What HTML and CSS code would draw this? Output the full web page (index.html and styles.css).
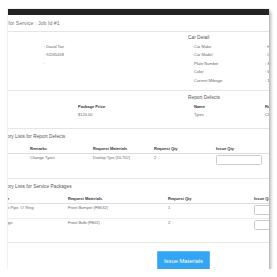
FILE: index.html
```html
<!DOCTYPE html>
<html>
<head>
    <title>Request for Service</title>
    <link rel="stylesheet" href="styles.css">
</head>
<body>
    <div class="modal">
        <div class="topbar"></div>
        <div class="modal-header">
            <h3 class="title">Request for Service : Job Id #1</h3>
        </div>
        <div class="modal-body">
            <div class="cols">
                <div class="col">
                    <h4>Customer Detail</h4>
                    <div class="row"><span class="label">Name</span><span>: David Tan</span></div>
                    <div class="row"><span class="label">Contact No.</span><span>: 92265458</span></div>
                    <div class="row"><span class="label">Email</span><span>:</span></div>
                </div>
                <div class="col">
                    <h4>Car Detail</h4>
                    <div class="row"><span class="label">Car Make</span><span>: Honda</span></div>
                    <div class="row"><span class="label">Car Model</span><span>: Civic</span></div>
                    <div class="row"><span class="label">Plate Number</span><span>: SJA1234</span></div>
                    <div class="row"><span class="label">Color</span><span>: White</span></div>
                    <div class="row"><span class="label">Current Mileage</span><span>: 12000</span></div>
                </div>
            </div>
            <hr>
            <div class="cols">
                <div class="col">
                    <h4>Service Package</h4>
                    <div class="row"><span class="label wide bold">Package Name</span><span class="bold">Package Price</span></div>
                    <div class="row"><span class="label wide">Basic Servicing</span><span>$120.00</span></div>
                </div>
                <div class="col">
                    <h4>Report Defects</h4>
                    <div class="row"><span class="label bold">Name</span><span class="bold">Remarks</span></div>
                    <div class="row"><span class="label">Tyres</span><span>Change Tyres</span></div>
                </div>
            </div>
            <hr>
            <h4 class="section">Inventory Lists for Report Defects</h4>
            <table class="items defects">
                <colgroup>
                    <col class="c61"><col class="c63"><col class="c61"><col class="c62"><col class="c70">
                </colgroup>
                <thead>
                    <tr><th>Name</th><th>Remarks</th><th>Request Materials</th><th>Request Qty</th><th>Issue Qty</th></tr>
                </thead>
                <tbody>
                    <tr><td>Tyres</td><td>Change Tyres</td><td>Dunlop Tyre (DL702)</td><td>2</td><td><input type="text"></td></tr>
                </tbody>
            </table>
            <hr class="gap">
            <h4 class="section">Inventory Lists for Service Packages</h4>
            <table class="items packages">
                <colgroup>
                    <col class="c26"><col class="c73"><col class="c100"><col class="c86"><col class="c70">
                </colgroup>
                <thead>
                    <tr><th>#</th><th>Service</th><th>Request Materials</th><th>Request Qty</th><th>Issue Qty</th></tr>
                </thead>
                <tbody>
                    <tr><td>1</td><td>Exhaust Pipe 'O' Ring</td><td>Front Bumper (FB632)</td><td>1</td><td><input type="text"></td></tr>
                    <tr><td>2</td><td>Tyre Align</td><td>Front Bulb (FB02)</td><td>2</td><td><input type="text"></td></tr>
                </tbody>
            </table>
            <div class="modal-footer">
                <button type="button" class="btn">Issue Materials</button>
            </div>
        </div>
    </div>
</body>
</html>
```

FILE: styles.css
```css
body { margin: 0; background: #fff; font-family: "Liberation Sans", Arial, sans-serif; }
.modal { margin: 9px 0 0 8px; width: 261px; height: 260px; overflow: hidden; background: #fff; box-shadow: 2px 2px 3px rgba(0,0,0,0.28), 0 0 0 1px rgba(0,0,0,0.04); }
.topbar { height: 6px; background: #232323; }
.modal-header { height: 16px; border-bottom: 1px solid #e5e5e5; }
.title { margin: 0 0 0 -21px; font-size: 5.3px; line-height: 16px; font-weight: normal; color: #777; white-space: nowrap; }
.modal-body { padding-top: 3px; }
h4 { margin: 0 0 1.75px; font-size: 4.8px; line-height: 6px; font-weight: normal; color: #555; white-space: nowrap; }
.cols { display: flex; margin-left: -41px; }
.cols + hr + .cols h4 { margin-bottom: 2px; }
.col { width: 221px; flex: none; }
.row { display: flex; height: 8.5px; line-height: 8.5px; font-size: 4px; color: #666; white-space: nowrap; }
.cols + hr + .cols .row { height: 8px; line-height: 8px; }
.label { width: 77px; flex: none; padding-left: 6px; box-sizing: border-box; }
.label.wide { width: 111px; }
.bold { font-weight: bold; color: #333; }
hr { height: 0; border: 0; border-top: 1px solid #e5e5e5; margin: 4.75px 0 0; }
.cols + hr + .cols { margin-top: 4px; }
.cols + hr + .cols + hr { margin-top: 9px; }
.section { margin: 5px 0 0 -14px; }
hr.gap { margin-top: 10px; }
.items { margin: 3px 0 0 -41px; border-collapse: collapse; table-layout: fixed; font-size: 4px; white-space: nowrap; }
.defects { width: 317px; }
.packages { width: 355px; }
.c26 { width: 26px; } .c61 { width: 61px; } .c62 { width: 62px; } .c63 { width: 63px; }
.c70 { width: 70px; } .c73 { width: 73px; } .c86 { width: 86px; } .c100 { width: 100px; }
.items th { padding: 2.5px 2px; line-height: 5px; text-align: left; font-weight: bold; color: #333; border-bottom: 1px solid #ddd; }
.items td { padding: 1px 2px 3px; line-height: 5px; vertical-align: top; color: #666; overflow: hidden; }
.items tbody tr + tr td { border-top: 1px solid #eee; }
.items input { display: block; width: 46px; height: 10px; padding: 0; margin: 0; border: 1px solid #ccc; border-radius: 1.5px; box-sizing: border-box; }
.modal-footer { margin-top: 9px; padding-top: 8px; border-top: 1px solid #e5e5e5; }
.btn { display: block; margin-left: 149px; width: 53px; height: 20px; padding: 0; border: 1px solid #5cb6f5; border-radius: 1px; background: #33a5f3; color: #fff; font-family: "Liberation Sans", Arial, sans-serif; font-size: 5.8px; }
```
